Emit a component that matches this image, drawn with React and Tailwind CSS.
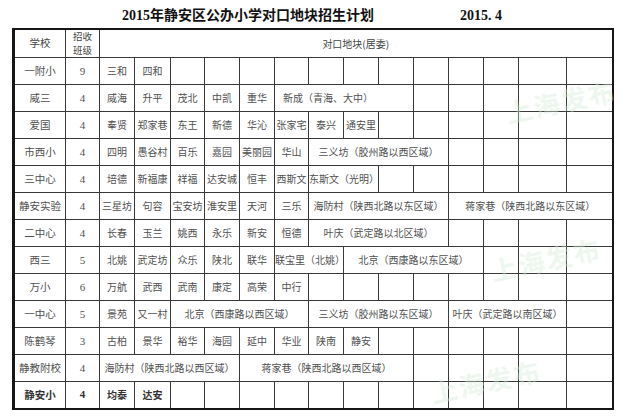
import React from 'react';

const blank = (n) => Array(n).fill('');

// column widths: 学校, 招收班级, then 14 地块 columns
const COLS = [
  'w-[52px]', 'w-[34px]',
  'w-[35px]', 'w-[36px]', 'w-[34px]', 'w-[35px]', 'w-[35px]', 'w-[34px]', 'w-[35px]',
  'w-[35px]', 'w-[35px]', 'w-[35px]', 'w-[35px]', 'w-[35px]', 'w-[48px]', 'w-[46px]',
];

const ROWS = [
  { name: '一附小', n: '9', cells: ['三和', '四和', ...blank(12)] },
  { name: '威三', n: '4', cells: ['威海', '升平', '茂北', '中凯', '重华', { t: '新成（青海、大中）', span: 4, left: true }, ...blank(5)] },
  { name: '爱国', n: '4', cells: ['奉贤', '郑家巷', '东王', '新德', '华沁', '张家宅', '泰兴', '通安里', ...blank(6)] },
  { name: '市西小', n: '4', cells: ['四明', '愚谷村', '百乐', '嘉园', '美丽园', '华山', { t: '三义坊（胶州路以西区域）', span: 4 }, ...blank(4)] },
  { name: '三中心', n: '4', cells: ['培德', '新福康', '祥福', '达安城', '恒丰', '西斯文', { t: '东斯文（光明）', span: 2 }, ...blank(6)] },
  { name: '静安实验', n: '4', cells: ['三星坊', '句容', '宝安坊', '淮安里', '天河', '三乐', { t: '海防村（陕西北路以东区域）', span: 4 }, { t: '蒋家巷（陕西北路以东区域）', span: 4 }] },
  { name: '二中心', n: '4', cells: ['长春', '玉兰', '姚西', '永乐', '新安', '恒德', { t: '叶庆（武定路以北区域）', span: 4 }, ...blank(4)] },
  { name: '西三', n: '5', cells: ['北姚', '武定坊', '众乐', '陕北', '联华', { t: '联宝里（北姚）', span: 2 }, { t: '北京（西康路以东区域）', span: 4 }, ...blank(3)] },
  { name: '万小', n: '6', cells: ['万航', '武西', '武南', '康定', '高荣', '中行', ...blank(8)] },
  { name: '一中心', n: '5', cells: ['景苑', '又一村', { t: '北京（西康路以西区域）', span: 4 }, { t: '三义坊（胶州路以东区域）', span: 4 }, { t: '叶庆（武定路以南区域）', span: 3 }, ''] },
  { name: '陈鹤琴', n: '3', cells: ['古柏', '景华', '裕华', '海园', '延中', '华业', '陕南', '静安', ...blank(6)] },
  { name: '静教附校', n: '4', cells: [{ t: '海防村（陕西北路以西区域）', span: 4 }, { t: '蒋家巷（陕西北路以西区域）', span: 5 }, ...blank(5)] },
  { name: '静安小', n: '4', bold: true, cells: ['均泰', '达安', ...blank(12)] },
];

// faint "上海发布" watermarks, kept over the empty right-hand cells
const MARKS = [
  'left-[505px] top-[88px]',
  'left-[490px] top-[246px]',
  'left-[430px] top-[368px]',
];

const cellBase = 'border border-[#3a3a3a] h-[27px] p-0 text-center align-middle whitespace-nowrap';

export default function App() {
  return (
    <div className="relative w-[628px] h-[419px] bg-white overflow-hidden font-['Noto_Sans_CJK_SC',sans-serif]">
      {/* Title */}
      <div className="flex items-center h-[28px] pt-[2px] font-['Liberation_Serif','Noto_Sans_CJK_SC',serif] font-bold text-[14px] text-[#111]">
        <span className="ml-[122px]">2015年静安区公办小学对口地块招生计划</span>
        <span className="ml-[86px]">2015. 4</span>
      </div>

      {/* Table */}
      <table className="ml-[12px] table-fixed border-collapse border-2 border-l-[3px] border-[#161616] w-[600px] text-[10px] text-[#505050] leading-none">
        <colgroup>
          {COLS.map((w, i) => (
            <col key={i} className={w} />
          ))}
        </colgroup>
        <thead>
          <tr>
            <th className={`${cellBase} h-[28px] font-normal text-[10.5px] text-[#444]`}>学校</th>
            <th className={`${cellBase} h-[28px] font-normal text-[9.5px] text-[#444] leading-[13.5px]`}>
              招收<br />班级
            </th>
            <th colSpan={14} className={`${cellBase} h-[28px] font-normal text-[10px] text-[#444]`}>
              对口地块(居委)
            </th>
          </tr>
        </thead>
        <tbody>
          {ROWS.map((row, r) => {
            const tone = row.bold ? 'font-bold text-[#333]' : '';
            return (
              <tr key={r}>
                <td className={`${cellBase} h-[27.2px] text-[10.5px] ${tone}`}>{row.name}</td>
                <td className={`${cellBase} font-['Liberation_Serif',serif] text-[11px] ${tone}`}>{row.n}</td>
                {row.cells.map((c, i) => {
                  if (typeof c === 'string') {
                    return (
                      <td key={i} className={`${cellBase} ${tone}`}>
                        {c}
                      </td>
                    );
                  }
                  return (
                    <td key={i} colSpan={c.span} className={`${cellBase} ${c.left ? 'text-left pl-[8px]' : ''} ${tone}`}>
                      {c.t}
                    </td>
                  );
                })}
              </tr>
            );
          })}
        </tbody>
      </table>

      {MARKS.map((pos, i) => (
        <span
          key={i}
          className={`absolute ${pos} pointer-events-none select-none whitespace-nowrap leading-none -rotate-12 text-[26px] font-bold text-[#d6ecd9] opacity-40 tracking-[2px]`}
        >
          上海发布
        </span>
      ))}
    </div>
  );
}
